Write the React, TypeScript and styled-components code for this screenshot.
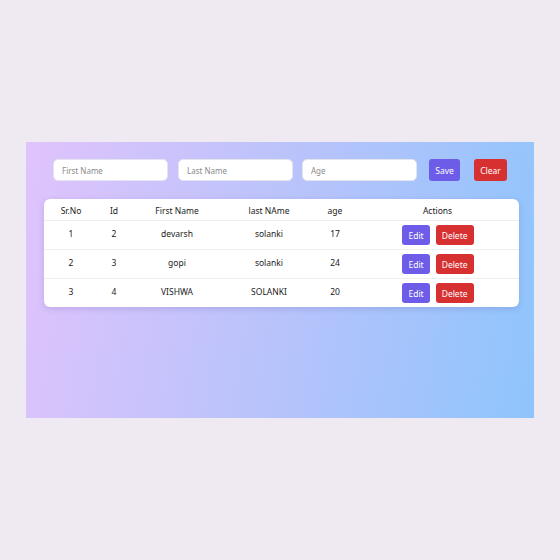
import React, { useState } from 'react';
import styled, { createGlobalStyle } from 'styled-components';

const GlobalStyle = createGlobalStyle`
  * { box-sizing: border-box; }
  body {
    margin: 0;
    background: #efe9f1;
    font-family: "Noto Sans", "Open Sans", sans-serif;
  }
`;

const Page = styled.div`
  min-height: 100vh;
  display: flex;
  align-items: center;
  justify-content: center;
`;

const Panel = styled.div`
  width: 508px;
  height: 276px;
  background: linear-gradient(100deg, #e0c3fc 0%, #b5c3fb 55%, #8ec5fc 100%);
  padding: 17px 15px 0 18px;
`;

const Form = styled.div`
  display: flex;
  align-items: center;
  padding-left: 9px;
  margin-bottom: 18px;
`;

const Input = styled.input<{ $gap: number }>`
  width: 115px;
  height: 22px;
  border: 1px solid #e4e4ec;
  border-radius: 5px;
  background: #fff;
  padding: 0 8px;
  font-family: inherit;
  font-size: 8px;
  color: #333;
  margin-right: ${p => p.$gap}px;
  outline: none;
  &::placeholder { color: #8a8a8a; }
`;

const Btn = styled.button<{ $tone: 'save' | 'clear' | 'edit' | 'delete' }>`
  height: ${p => (p.$tone === 'save' || p.$tone === 'clear' ? '22px' : '20px')};
  padding: 0 6px;
  border: none;
  border-radius: 3px;
  font-family: inherit;
  font-size: 8.5px;
  color: #fff;
  cursor: pointer;
  background: ${p => (p.$tone === 'save' || p.$tone === 'edit' ? '#6c5ce7' : '#d63031')};
`;

const FormBtn = styled(Btn)<{ $w: number; $gap: number }>`
  width: ${p => p.$w}px;
  margin-right: ${p => p.$gap}px;
  padding: 0;
`;

const Card = styled.div`
  background: #fff;
  border-radius: 6px;
  box-shadow: 0 2px 6px rgba(80, 60, 140, 0.18);
  overflow: hidden;
`;

const Row = styled.div<{ $head?: boolean }>`
  display: grid;
  grid-template-columns: 54px 32px 94px 90px 42px 1fr;
  align-items: center;
  height: ${p => (p.$head ? '21px' : '29px')};
  border-top: ${p => (p.$head ? 'none' : '1px solid #efefef')};
  font-size: 8.5px;
  color: #1a1a1a;
`;

const Cell = styled.div`
  text-align: center;
  padding-bottom: 4px;
`;

const HeadCell = styled.div`
  text-align: center;
  padding-top: 1px;
`;

const Actions = styled.div`
  display: flex;
  justify-content: center;
  gap: 6px;
  padding-left: 1px;
`;

interface Person {
  sr: number;
  id: number;
  first: string;
  last: string;
  age: number;
}

const data: Person[] = [
  { sr: 1, id: 2, first: 'devarsh', last: 'solanki', age: 17 },
  { sr: 2, id: 3, first: 'gopi', last: 'solanki', age: 24 },
  { sr: 3, id: 4, first: 'VISHWA', last: 'SOLANKI', age: 20 },
];

const App = () => {
  const [rows] = useState(data);

  return (
    <Page>
      <GlobalStyle />
      <Panel>
        <Form>
          <Input placeholder="First Name" $gap={10} />
          <Input placeholder="Last Name" $gap={9} />
          <Input placeholder="Age" $gap={12} />
          <FormBtn $tone="save" $w={31} $gap={14}>Save</FormBtn>
          <FormBtn $tone="clear" $w={33} $gap={0}>Clear</FormBtn>
        </Form>
        <Card>
          <Row $head>
            <HeadCell>Sr.No</HeadCell>
            <HeadCell>Id</HeadCell>
            <HeadCell>First Name</HeadCell>
            <HeadCell>last NAme</HeadCell>
            <HeadCell>age</HeadCell>
            <HeadCell>Actions</HeadCell>
          </Row>
          {rows.map(r => (
            <Row key={r.id}>
              <Cell>{r.sr}</Cell>
              <Cell>{r.id}</Cell>
              <Cell>{r.first}</Cell>
              <Cell>{r.last}</Cell>
              <Cell>{r.age}</Cell>
              <Actions>
                <Btn $tone="edit">Edit</Btn>
                <Btn $tone="delete">Delete</Btn>
              </Actions>
            </Row>
          ))}
        </Card>
      </Panel>
    </Page>
  );
};

export default App;
